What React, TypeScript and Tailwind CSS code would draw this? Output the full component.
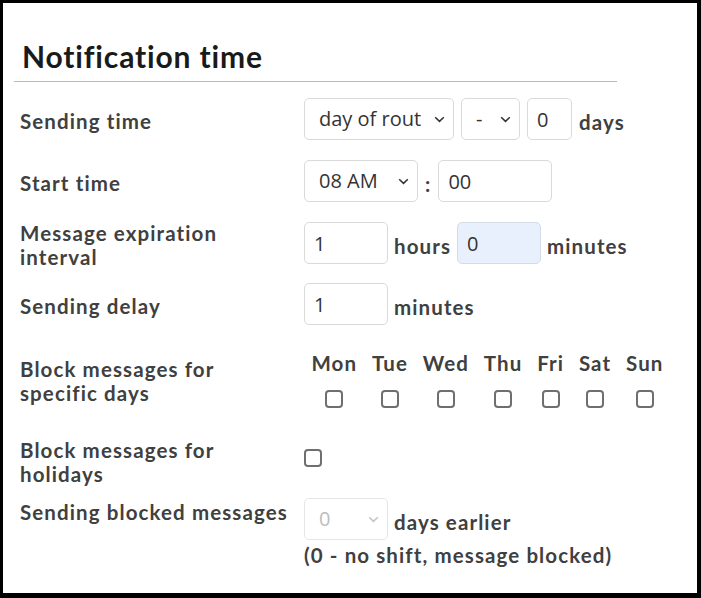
import React from "react";

const labelCls =
  "font-['Lato',sans-serif] font-bold text-[20.5px] tracking-[1.1px] leading-[24px] text-[#404040]";
const wordCls = `${labelCls} pt-[5px]`;
const fieldFont = "font-['Open_Sans',sans-serif] text-[20px] text-[#333]";

function Chevron({ color = "#333" }: { color?: string }) {
  return (
    <svg width="11" height="7" viewBox="0 0 11 7" className="ml-auto shrink-0">
      <path d="M1.2 1.2l4.3 4.2 4.3-4.2" fill="none" stroke={color} strokeWidth="1.5" />
    </svg>
  );
}

function Select({
  text,
  width,
  disabled,
}: {
  text: string;
  width: string;
  disabled?: boolean;
}) {
  return (
    <div
      className={`h-[42px] ${width} flex items-center pl-[14px] pr-[8px] border rounded-[5px] whitespace-nowrap ${
        disabled ? "border-[#e6e6e6] text-[#bdbdbd]" : "border-[#dadada] text-[#333]"
      } font-['Open_Sans',sans-serif] text-[20px]`}
    >
      <span>{text}</span>
      <Chevron color={disabled ? "#c4c4c4" : "#333"} />
    </div>
  );
}

function Field({
  value,
  width,
  filled,
}: {
  value: string;
  width: string;
  filled?: boolean;
}) {
  return (
    <input
      readOnly
      value={value}
      className={`h-[42px] ${width} pl-[9px] border rounded-[5px] outline-none ${fieldFont} ${
        filled ? "bg-[#e8f0fe] border-[#d3dbe6]" : "bg-white border-[#dadada]"
      }`}
    />
  );
}

function Check() {
  return (
    <span className="block w-[18px] h-[18px] border-2 border-[#6f6f6f] rounded-[4px] bg-white" />
  );
}

const days = ["Mon", "Tue", "Wed", "Thu", "Fri", "Sat", "Sun"];

export default function App() {
  return (
    <div className="w-[701px] h-[598px] bg-white border-solid border-black border-t-[3px] border-l-[3px] border-r-[4px] border-b-[5px] overflow-hidden">
      <div className="pl-[11px] pt-[35px]">
        <h2 className="w-[603px] pl-[8px] pb-[7px] font-['Lato',sans-serif] font-bold text-[30px] tracking-[0.85px] leading-[36px] text-[#1a1a1a]">
          Notification time
        </h2>
        <div className="w-[603px] h-[1px] bg-[#86c8f6]" />
      </div>

      <div className="pl-[17px]">
        {/* Sending time */}
        <div className="flex items-center h-[42px] mt-[16px]">
          <div className={`${labelCls} w-[284px] pr-[10px] pt-[3px] shrink-0`}>Sending time</div>
          <div className="flex items-center gap-[7px]">
            <Select text="day of rout" width="w-[150px]" />
            <Select text="-" width="w-[59px]" />
            <Field value="0" width="w-[45px]" />
            <span className={wordCls}>days</span>
          </div>
        </div>

        {/* Start time */}
        <div className="flex items-center h-[42px] mt-[20px]">
          <div className={`${labelCls} w-[284px] pr-[10px] pt-[3px] shrink-0`}>Start time</div>
          <div className="flex items-center">
            <Select text="08 AM" width="w-[114px]" />
            <span className={`${wordCls} mx-[7px]`}>:</span>
            <Field value="00" width="w-[114px]" />
          </div>
        </div>

        {/* Message expiration interval */}
        <div className="flex items-center h-[42px] mt-[20px]">
          <div className={`${labelCls} w-[284px] pr-[10px] pt-[3px] shrink-0`}>
            Message expiration
            <br />
            interval
          </div>
          <div className="flex items-center gap-[6px]">
            <Field value="1" width="w-[84px]" />
            <span className={wordCls}>hours</span>
            <Field value="0" width="w-[84px]" filled />
            <span className={wordCls}>minutes</span>
          </div>
        </div>

        {/* Sending delay */}
        <div className="flex items-center h-[42px] mt-[19px]">
          <div className={`${labelCls} w-[284px] pr-[10px] pt-[3px] shrink-0`}>Sending delay</div>
          <div className="flex items-center gap-[6px]">
            <Field value="1" width="w-[84px]" />
            <span className={wordCls}>minutes</span>
          </div>
        </div>

        {/* Block messages for specific days */}
        <div className="flex items-center mt-[26px]">
          <div className={`${labelCls} w-[284px] pr-[10px] pt-[3px] shrink-0`}>
            Block messages for
            <br />
            specific days
          </div>
          <div className="flex">
            {days.map((d) => (
              <div key={d} className="flex flex-col items-center px-[7.4px]">
                <span className={`${labelCls} tracking-[0.9px]`}>{d}</span>
                <span className="mt-[15px]">
                  <Check />
                </span>
              </div>
            ))}
          </div>
        </div>

        {/* Block messages for holidays */}
        <div className="flex items-start mt-[30px]">
          <div className={`${labelCls} w-[284px] pr-[10px] shrink-0`}>
            Block messages for
            <br />
            holidays
          </div>
          <span className="mt-[11px]">
            <Check />
          </span>
        </div>

        {/* Sending blocked messages */}
        <div className="flex items-start mt-[12px]">
          <div className={`${labelCls} w-[284px] pr-[4px] shrink-0 pt-[2px] whitespace-nowrap`}>
            Sending blocked messages
          </div>
          <div className="flex flex-col">
            <div className="flex items-center gap-[6px]">
              <Select text="0" width="w-[84px]" disabled />
              <span className={wordCls}>days earlier</span>
            </div>
            <span className={`${labelCls} mt-[3px]`}>(0 - no shift, message blocked)</span>
          </div>
        </div>
      </div>
    </div>
  );
}
